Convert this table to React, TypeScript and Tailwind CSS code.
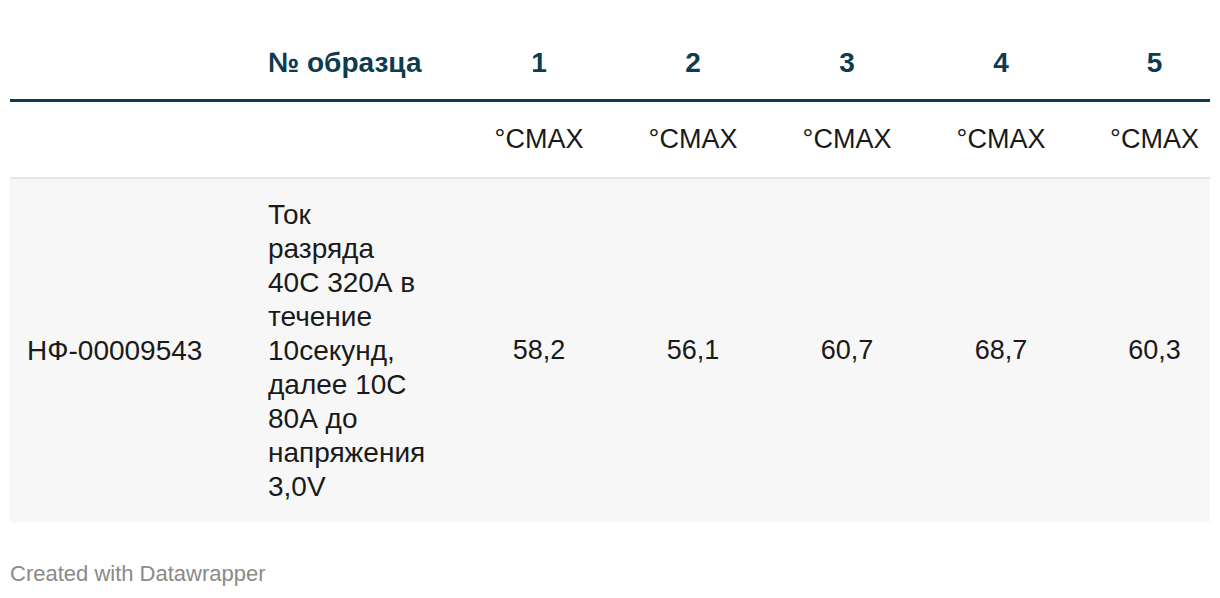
import React from "react";

const nums = ["1", "2", "3", "4", "5"];
const vals = ["58,2", "56,1", "60,7", "68,7", "60,3"];
const lines = ["Ток", "разряда", "40С 320А в", "течение", "10секунд,", "далее 10С", "80А до", "напряжения", "3,0V"];

export default function App() {
  return (
    <div className="w-[1220px] h-[598px] bg-white px-[10px] pt-[36px]" style={{ fontFamily: "'Liberation Sans', Arial, sans-serif" }}>
      <div className="grid grid-cols-[258px_173px_154px_154px_154px_154px_153px] w-[1200px]">
        {/* header row */}
        <div className="h-[66px] border-b-[3px] border-[#0d3b4f]" />
        <div className="h-[66px] border-b-[3px] border-[#0d3b4f] text-[28px] font-bold text-[#0d3b4f] leading-[54px] whitespace-nowrap">№ образца</div>
        {nums.map((n) => (
          <div key={n} className="h-[66px] border-b-[3px] border-[#0d3b4f] text-[28px] font-bold text-[#0d3b4f] leading-[54px] text-center pl-[42px]">{n}</div>
        ))}
        {/* units row */}
        <div className="h-[77px] border-b-2 border-[#e6e6e6]" />
        <div className="h-[77px] border-b-2 border-[#e6e6e6]" />
        {nums.map((n) => (
          <div key={n} className="h-[77px] border-b-2 border-[#e6e6e6] text-[27px] text-[#1a1a1a] leading-[75px] text-center pl-[42px]">°CMAX</div>
        ))}
        {/* data row */}
        <div className="bg-[#f7f7f7] h-[343px] flex items-center pl-[17px] text-[28px] text-[#1a1a1a]">НФ-00009543</div>
        <div className="bg-[#f7f7f7] h-[343px] flex flex-col justify-center pr-[5px] text-[28px] leading-[34px] text-[#1a1a1a]">
          {lines.map((l) => (
            <div key={l} className="whitespace-nowrap">{l}</div>
          ))}
        </div>
        {vals.map((v) => (
          <div key={v} className="bg-[#f7f7f7] h-[343px] flex items-center justify-center pl-[42px] text-[27px] text-[#1a1a1a]">{v}</div>
        ))}
      </div>
      <div className="mt-[35px] text-[22px] text-[#8a8a8a]">Created with Datawrapper</div>
    </div>
  );
}
